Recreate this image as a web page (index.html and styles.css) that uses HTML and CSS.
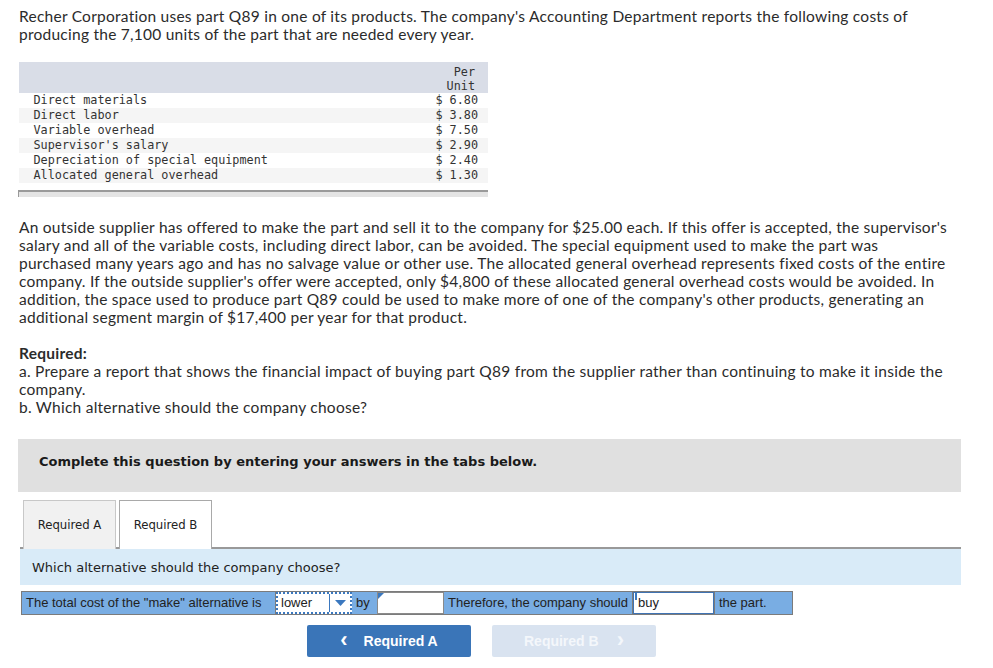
FILE: index.html
```html
<!DOCTYPE html>
<html>
<head>
<meta charset="utf-8">
<link rel="stylesheet" href="styles.css">
</head>
<body>
<div class="page">
  <p class="intro">Recher Corporation uses part Q89 in one of its products. The company's Accounting Department reports the following costs of producing the 7,100 units of the part that are needed every year.</p>

  <table class="costs">
    <thead>
      <tr><th class="lbl"></th><th class="val">Per<br>Unit</th></tr>
    </thead>
    <tbody>
      <tr><td class="lbl">Direct materials</td><td class="val">$ 6.80</td></tr>
      <tr><td class="lbl">Direct labor</td><td class="val">$ 3.80</td></tr>
      <tr><td class="lbl">Variable overhead</td><td class="val">$ 7.50</td></tr>
      <tr><td class="lbl">Supervisor's salary</td><td class="val">$ 2.90</td></tr>
      <tr><td class="lbl">Depreciation of special equipment</td><td class="val">$ 2.40</td></tr>
      <tr><td class="lbl">Allocated general overhead</td><td class="val">$ 1.30</td></tr>
    </tbody>
    <tfoot>
      <tr class="spacer"><td colspan="2"></td></tr>
      <tr class="foot"><td colspan="2"></td></tr>
    </tfoot>
  </table>

  <p class="body">An outside supplier has offered to make the part and sell it to the company for $25.00 each. If this offer is accepted, the supervisor's salary and all of the variable costs, including direct labor, can be avoided. The special equipment used to make the part was purchased many years ago and has no salvage value or other use. The allocated general overhead represents fixed costs of the entire company. If the outside supplier's offer were accepted, only $4,800 of these allocated general overhead costs would be avoided. In addition, the space used to produce part Q89 could be used to make more of one of the company's other products, generating an additional segment margin of $17,400 per year for that product.</p>

  <div class="required">
    <div class="req-title">Required:</div>
    <div>a. Prepare a report that shows the financial impact of buying part Q89 from the supplier rather than continuing to make it inside the company.</div>
    <div>b. Which alternative should the company choose?</div>
  </div>

  <div class="banner">Complete this question by entering your answers in the tabs below.</div>

  <div class="tabs">
    <div class="tab">Required A</div>
    <div class="tab active">Required B</div>
  </div>

  <div class="question">Which alternative should the company choose?</div>

  <div class="answer">
    <div class="cell text">The total cost of the "make" alternative is</div>
    <div class="cell select">
      <span class="sel-val">lower</span>
      <span class="sel-arrow"><svg width="11" height="6" viewBox="0 0 11 6"><path d="M0 0H11L5.5 6Z" fill="#3b78bf"/></svg></span>
    </div>
    <div class="cell text by">by</div>
    <div class="cell input num"><span class="flag"></span></div>
    <div class="cell text">Therefore, the company should</div>
    <div class="cell input word"><span class="flag"></span>buy</div>
    <div class="cell text last">the part.</div>
  </div>

  <div class="nav">
    <div class="btn prev"><span class="chev">&lsaquo;</span>Required A</div>
    <div class="btn next disabled">Required B<span class="chev">&rsaquo;</span></div>
  </div>
</div>
</body>
</html>
```

FILE: styles.css
```css
html, body {
  margin: 0;
  padding: 0;
  background: #fff;
}

.page {
  width: 943px;
  padding: 7px 0 0 18px;
  font-family: Lato, "Open Sans", sans-serif;
  font-size: 15.5px;
  line-height: 18px;
  color: #2b2b2b;
}

.intro,
.body,
.required {
  letter-spacing: 0.25px;
}

.intro {
  margin: 0 11px 19px 1px;
}

.costs {
  width: 470px;
  border-collapse: collapse;
  font-family: "DejaVu Sans Mono", "Liberation Mono", monospace;
  font-size: 11.8px;
  line-height: 15px;
  color: #333;
}

.costs th {
  background: #d9dde7;
  font-weight: normal;
  height: 30px;
  padding: 1px 0 0;
  line-height: 14px;
  vertical-align: bottom;
}

.costs td {
  padding: 0;
  height: 15px;
}

.costs .lbl {
  text-align: left;
  padding-left: 15px;
}

.costs .val {
  text-align: right;
  padding-right: 10px;
  width: 80px;
}

.costs th.val {
  text-align: right;
  padding-right: 13px;
}

.costs tbody tr:nth-child(even) td {
  background: #f5f5f5;
}

.costs .spacer td {
  height: 7px;
}

.costs .foot td {
  height: 5px;
  padding: 0;
  background: #e4e4e4;
  border-top: 2px solid #9a9a9a;
  border-left: 1px solid #9a9a9a;
}

.body {
  margin: 21px 11px 0 1px;
}

.required {
  margin: 18px 11px 0 1px;
}

.req-title {
  font-weight: bold;
}

.banner {
  margin-top: 23px;
  height: 53px;
  box-sizing: border-box;
  background: #e0e0e0;
  padding: 14px 0 0 21px;
  font-family: "DejaVu Sans", Verdana, sans-serif;
  font-weight: bold;
  font-size: 13px;
  line-height: 17px;
  color: #1a1a1a;
}

.tabs {
  display: flex;
  gap: 3px;
  margin: 8px 0 0 2px;
  padding-left: 3px;
  border-bottom: 2px solid #999;
  height: 47px;
  align-items: flex-end;
}

.tab {
  box-sizing: border-box;
  width: 93px;
  height: 49px;
  display: flex;
  align-items: center;
  justify-content: center;
  border: 1px solid #c8c8c8;
  border-bottom: none;
  background: #f1f1f1;
  font-family: "DejaVu Sans Condensed", "DejaVu Sans", sans-serif;
  font-size: 13px;
  color: #222;
  margin-bottom: -2px;
}

.tab.active {
  background: #fff;
  border-color: #a9a9a9;
}

.question {
  margin-left: 2px;
  height: 36px;
  box-sizing: border-box;
  background: #d9ebf8;
  padding: 10px 0 0 12px;
  font-family: "DejaVu Sans", Verdana, sans-serif;
  font-size: 13px;
  line-height: 17px;
  color: #222;
}

.answer {
  display: flex;
  margin: 6px 0 0 3px;
  width: 772px;
  height: 24px;
  box-sizing: border-box;
  border: 1px solid #7b7b7b;
  background: #79ade3;
  font-family: "Liberation Sans", Arial, sans-serif;
  font-size: 13px;
  line-height: 22px;
  color: #222;
}

.cell {
  box-sizing: border-box;
  height: 22px;
  white-space: nowrap;
}

.cell.text {
  padding: 0 4px;
  border-right: 1px solid #7b7b7b;
}

.cell.text:first-child {
  width: 254px;
}

.cell.by {
  width: 25px;
  padding-left: 4px;
  border-right: none;
}

.cell.last {
  flex: 1;
  border-right: none;
}

.cell.select {
  width: 76px;
  background: #fff;
  border: 2px dotted #3b78bf;
  display: flex;
  align-items: center;
}

.sel-val {
  flex: 1;
  padding-left: 3px;
  line-height: 18px;
}

.sel-arrow {
  width: 20px;
  height: 18px;
  border-left: 1px solid #3b78bf;
  display: flex;
  align-items: center;
  justify-content: center;
}

.cell.input {
  position: relative;
  background: #fff;
  border: 1px solid #5d86b8;
  padding-left: 4px;
  line-height: 20px;
}

.cell.num {
  width: 67px;
  border-color: #8a8a8a;
}

.cell.word {
  width: 81px;
  border-color: #3f73b3;
}

.cell.word + .cell {
  border-left: 1px solid #7b7b7b;
}

.flag {
  position: absolute;
  left: 0;
  top: 0;
  width: 0;
  height: 0;
  border-top: 6px solid #3b78bf;
  border-right: 6px solid transparent;
}

.cell.word .flag {
  border-top: 0;
  border-right: 0;
  width: 2px;
  height: 7px;
  background: #3b78bf;
  left: 1px;
}

.nav {
  display: flex;
  gap: 21px;
  margin: 10px 0 0 289px;
}

.btn {
  width: 164px;
  height: 32px;
  border-radius: 2px;
  display: flex;
  align-items: center;
  justify-content: center;
  font-family: "Liberation Sans", Arial, sans-serif;
  font-weight: bold;
  font-size: 14px;
  color: #fff;
}

.btn.prev {
  background: #3a75b8;
}

.btn.disabled {
  background: #d9e3f0;
  color: #f4f7fb;
}

.chev {
  font-size: 22px;
  font-weight: bold;
  line-height: 20px;
  margin-top: -3px;
}

.prev .chev {
  margin-right: 16px;
}

.next .chev {
  margin-left: 18px;
}
```
